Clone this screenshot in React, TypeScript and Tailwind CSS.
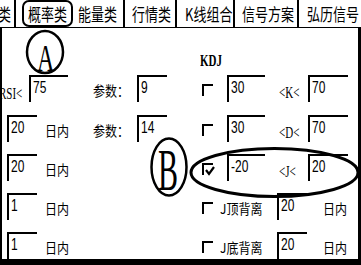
import * as React from 'react';

const cjk = "font-['Noto_Sans_CJK_SC',sans-serif]";
const serif = "font-['Liberation_Serif','Noto_Sans_CJK_SC',serif]";
const sans = "font-['Liberation_Sans',sans-serif]";

function Field({ className, value }: { className: string; value: string }) {
  return (
    <div
      className={`${sans} h-[27px] shrink-0 border-t-2 border-l-2 border-black pl-[2px] pt-[3px] text-[12px] leading-none text-black ${className}`}
    >
      <span className="inline-block origin-top scale-y-[1.3]">{value}</span>
    </div>
  );
}

function Label({ className, children }: { className: string; children: React.ReactNode }) {
  return (
    <div className={`${cjk} shrink-0 whitespace-nowrap pt-[2px] text-[12px] leading-none text-black ${className}`}>
      <span className="inline-block origin-top scale-y-[1.12]">{children}</span>
    </div>
  );
}

function Check({ checked = false }: { checked?: boolean }) {
  return (
    <div className="relative ml-[2px] mt-[2px] h-[12px] w-[11px] shrink-0 border-t-2 border-l-2 border-black">
      {checked && (
        <svg className="absolute left-[1px] top-[1px]" width="10" height="10" viewBox="0 0 10 10">
          <path d="M1 4 L4 8 L9 1" fill="none" stroke="black" strokeWidth="2.2" />
        </svg>
      )}
    </div>
  );
}

function Tab({ className, label }: { className: string; label: string }) {
  return (
    <div className={`flex shrink-0 items-center ${className}`}>
      <span className={`${cjk} inline-block origin-center scale-y-[1.3] whitespace-nowrap text-[13px] leading-none text-black`}>
        {label}
      </span>
    </div>
  );
}

function Cmp({ label }: { label: string }) {
  return (
    <div className={`${serif} ml-[15px] w-[18px] shrink-0 whitespace-nowrap pt-[3px] text-[11px] leading-none text-black`}>
      <span className="-ml-[1px] inline-block origin-top scale-y-[1.45]">{label}</span>
    </div>
  );
}

function KdjRow({ letter, low, high, checked = false }: { letter: string; low: string; high: string; checked?: boolean }) {
  return (
    <div className="flex h-[27px] items-center">
      <Check checked={checked} />
      <Field className="ml-[14px] w-[38px]" value={low} />
      <Cmp label={`<${letter}<`} />
      <Field className="ml-[10px] w-[40px]" value={high} />
    </div>
  );
}

function DivRow({ label }: { label: string }) {
  return (
    <div className="flex h-[27px] items-center">
      <Check />
      <Label className="ml-[7px] w-[42px]">{label}</Label>
      <Field className="ml-[15px] w-[30px]" value="20" />
      <Label className="ml-[16px]">日内</Label>
    </div>
  );
}

function DaysLeft({ value, param }: { value: string; param?: string }) {
  return (
    <div className="flex h-[27px] w-[198px] shrink-0 items-center">
      <Field className="ml-[5px] w-[30px]" value={value} />
      <Label className="ml-[8px] w-[22px]">日内</Label>
      {param && (
        <>
          <Label className="ml-[26px] w-[44px]">参数：</Label>
          <Field className="w-[30px]" value={param} />
        </>
      )}
    </div>
  );
}

export default function App() {
  return (
    <div className="relative h-[265px] w-[361px] overflow-hidden bg-white">
      <div className="flex h-[28px] border-b border-black">
        <Tab className="w-[16px] justify-end border-r-2 border-black pr-[3px]" label="类" />
        <Tab className="ml-[6px] w-[51px] justify-center rounded-[7px] border-2 border-black" label="概率类" />
        <Tab className="w-[52px] border-r-2 border-black pl-[5px]" label="能量类" />
        <Tab className="w-[52px] border-r-2 border-black pl-[7px]" label="行情类" />
        <Tab className="w-[58px] border-r-2 border-black pl-[8px]" label="K线组合" />
        <Tab className="w-[64px] border-r-2 border-black pl-[7px]" label="信号方案" />
        <Tab className="pl-[8px]" label="弘历信号" />
      </div>

      <div className="flex h-[237px] flex-col border-l-2 border-r-[3px] border-b-[6px] border-black">
        <div className={`${serif} ml-[198px] mt-[25px] h-[23px] text-[11px] font-bold leading-none text-black`}>
          <span className="inline-block origin-top scale-y-[1.45]">KDJ</span>
        </div>

        <div className="flex">
          <div className="flex h-[27px] w-[198px] shrink-0 items-center">
            <div className={`${serif} w-[27px] shrink-0 pt-[3px] text-[11px] leading-none text-black`}>
              <span className="-ml-[3px] inline-block origin-top scale-y-[1.5]">RSI&lt;</span>
            </div>
            <Field className="w-[39px]" value="75" />
            <Label className="ml-[25px] w-[44px]">参数：</Label>
            <Field className="w-[30px]" value="9" />
          </div>
          <KdjRow letter="K" low="30" high="70" />
        </div>

        <div className="mt-[13px] flex">
          <DaysLeft value="20" param="14" />
          <KdjRow letter="D" low="30" high="70" />
        </div>

        <div className="mt-[12px] flex">
          <DaysLeft value="20" />
          <KdjRow letter="J" low="-20" high="20" checked />
        </div>

        <div className="mt-[12px] flex">
          <DaysLeft value="1" />
          <DivRow label="J顶背离" />
        </div>

        <div className="mt-[12px] flex">
          <DaysLeft value="1" />
          <DivRow label="J底背离" />
        </div>
      </div>

      {/* hand-drawn annotations over the dialog */}
      <svg className="pointer-events-none absolute left-0 top-0" width="361" height="265" viewBox="0 0 361 265">
        <ellipse cx="45" cy="52" rx="18" ry="21" fill="none" stroke="black" strokeWidth="2.5" />
        <ellipse cx="169" cy="167" rx="17.5" ry="28.5" fill="none" stroke="black" strokeWidth="2.5" />
        <ellipse cx="274.5" cy="172.5" rx="83.5" ry="24" fill="none" stroke="black" strokeWidth="3" />
      </svg>
      <div className={`${serif} pointer-events-none absolute left-[37px] top-[39px] text-[24px] leading-none text-black`}>
        <span className="inline-block origin-top scale-y-[1.6]">A</span>
      </div>
      <div className={`${serif} pointer-events-none absolute left-[158px] top-[140px] text-[30px] leading-none text-black`}>
        <span className="inline-block origin-top scale-y-[2]">B</span>
      </div>
    </div>
  );
}
